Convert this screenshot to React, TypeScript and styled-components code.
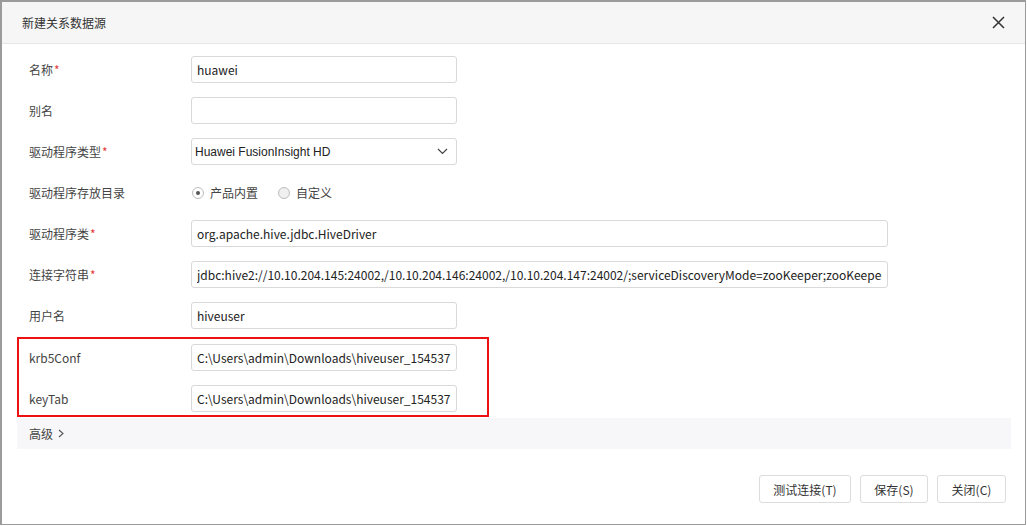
import { createGlobalStyle } from 'styled-components';
import styled from 'styled-components';

const GlobalStyle = createGlobalStyle`
  html, body {
    margin: 0;
    padding: 0;
    background: #ffffff;
  }
  * {
    box-sizing: border-box;
  }
`;

const CJK = `"Noto Sans CJK SC", "Liberation Sans", sans-serif`;

const Dialog = styled.div`
  width: 1026px;
  height: 525px;
  border: 2px solid #9b9b9b;
  border-right-width: 1px;
  border-bottom-width: 1px;
  background: #fff;
  display: flex;
  flex-direction: column;
  font-family: ${CJK};
  color: #333;
`;

const Header = styled.div`
  height: 42px;
  flex: none;
  display: flex;
  align-items: center;
  justify-content: space-between;
  padding: 0 17px 0 20px;
  background: #f6f6f6;
  border-bottom: 1px solid #e6e6e6;
`;

const Title = styled.span`
  font-size: 12px;
  color: #333;
`;

const CloseButton = styled.button`
  width: 20px;
  height: 20px;
  padding: 0;
  border: 0;
  background: transparent;
  display: flex;
  align-items: center;
  justify-content: center;
  cursor: pointer;
`;

const Body = styled.div`
  flex: 1;
  display: flex;
  flex-direction: column;
  padding: 12px 14px 0 15px;
`;

const Fields = styled.div`
  display: flex;
  flex-direction: column;
  gap: 14px;
`;

const Row = styled.div`
  display: grid;
  grid-template-columns: 174px auto;
  align-items: center;
  min-height: 27px;
`;

const Label = styled.label`
  padding-left: 12px;
  font-size: 12px;
  color: #444;
`;

const Required = styled.span`
  color: #e63b3b;
  margin-left: 1px;
`;

const TextInput = styled.input<{ $wide?: boolean }>`
  width: ${p => (p.$wide ? '697px' : '266px')};
  height: 27px;
  padding: 0 5px;
  border: 1px solid #d9d9d9;
  border-radius: 3px;
  background: #fff;
  font-family: ${CJK};
  font-size: 12px;
  color: #222;
  outline: none;
`;

const SelectBox = styled.div`
  width: 266px;
  height: 27px;
  display: flex;
  align-items: center;
  justify-content: space-between;
  padding: 0 8px 0 3px;
  border: 1px solid #d9d9d9;
  border-radius: 3px;
  font-family: "Liberation Sans", sans-serif;
  font-size: 12px;
  color: #222;
`;

const RadioGroup = styled.div`
  display: flex;
  align-items: center;
  gap: 20px;
  padding-left: 1px;
`;

const RadioOption = styled.label`
  display: flex;
  align-items: center;
  gap: 6px;
  font-size: 12px;
  color: #444;
`;

const RadioCircle = styled.span<{ $checked?: boolean }>`
  width: 12px;
  height: 12px;
  border-radius: 50%;
  border: 1px solid #bdbdbd;
  background: ${p => (p.$checked ? '#fff' : '#f0f0f0')};
  display: flex;
  align-items: center;
  justify-content: center;

  &::after {
    content: '';
    width: 4px;
    height: 4px;
    border-radius: 50%;
    background: #555;
    display: ${p => (p.$checked ? 'block' : 'none')};
  }
`;

const Highlight = styled.div`
  width: 472px;
  margin-top: -6px;
  padding: 5px 0 3px;
  border: 2px solid #ee1111;
  display: flex;
  flex-direction: column;
  gap: 14px;

  & > ${Row} {
    margin-left: -2px;
  }
`;

const Advanced = styled.div`
  margin-top: 1px;
  height: 31px;
  display: flex;
  align-items: center;
  gap: 4px;
  padding-left: 12px;
  background: #f7f7f9;
  font-size: 12px;
  color: #444;
`;

const Footer = styled.div`
  display: flex;
  justify-content: flex-end;
  gap: 9px;
  padding: 26px 5px 0 0;
`;

const FooterButton = styled.button<{ $w: number }>`
  width: ${p => p.$w}px;
  height: 28px;
  border: 1px solid #dcdcdc;
  border-radius: 3px;
  background: #fff;
  font-family: ${CJK};
  font-size: 12px;
  color: #333;
  cursor: pointer;
`;

const CONN =
  'jdbc:hive2://10.10.204.145:24002,/10.10.204.146:24002,/10.10.204.147:24002/;serviceDiscoveryMode=zooKeeper;zooKeeperNamespace=hiveserver2;sasl.qop=auth-conf;auth=KERBEROS';
const PATH = 'C:\\Users\\admin\\Downloads\\hiveuser_1545371234567_keytab';

export default function App() {
  return (
    <>
      <GlobalStyle />
      <Dialog>
        <Header>
          <Title>新建关系数据源</Title>
          <CloseButton aria-label="close">
            <svg width="13" height="13" viewBox="0 0 13 13">
              <path d="M1 1 L12 12 M12 1 L1 12" stroke="#333" strokeWidth="1.5" />
            </svg>
          </CloseButton>
        </Header>
        <Body>
          <Fields>
            <Row>
              <Label>名称<Required>*</Required></Label>
              <TextInput defaultValue="huawei" />
            </Row>
            <Row>
              <Label>别名</Label>
              <TextInput defaultValue="" />
            </Row>
            <Row>
              <Label>驱动程序类型<Required>*</Required></Label>
              <SelectBox>
                <span>Huawei FusionInsight HD</span>
                <svg width="11" height="7" viewBox="0 0 11 7">
                  <path d="M1 1 L5.5 5.5 L10 1" stroke="#444" strokeWidth="1.2" fill="none" />
                </svg>
              </SelectBox>
            </Row>
            <Row>
              <Label>驱动程序存放目录</Label>
              <RadioGroup>
                <RadioOption><RadioCircle $checked />产品内置</RadioOption>
                <RadioOption><RadioCircle />自定义</RadioOption>
              </RadioGroup>
            </Row>
            <Row>
              <Label>驱动程序类<Required>*</Required></Label>
              <TextInput $wide defaultValue="org.apache.hive.jdbc.HiveDriver" />
            </Row>
            <Row>
              <Label>连接字符串<Required>*</Required></Label>
              <TextInput $wide defaultValue={CONN} />
            </Row>
            <Row>
              <Label>用户名</Label>
              <TextInput defaultValue="hiveuser" />
            </Row>
            <Highlight>
              <Row>
                <Label>krb5Conf</Label>
                <TextInput defaultValue={PATH} />
              </Row>
              <Row>
                <Label>keyTab</Label>
                <TextInput defaultValue={PATH} />
              </Row>
            </Highlight>
          </Fields>
          <Advanced>
            高级
            <svg width="8" height="9" viewBox="0 0 8 9">
              <path d="M2 1 L6 4.5 L2 8" stroke="#555" strokeWidth="1.1" fill="none" />
            </svg>
          </Advanced>
          <Footer>
            <FooterButton $w={92}>测试连接(T)</FooterButton>
            <FooterButton $w={68}>保存(S)</FooterButton>
            <FooterButton $w={69}>关闭(C)</FooterButton>
          </Footer>
        </Body>
      </Dialog>
    </>
  );
}
